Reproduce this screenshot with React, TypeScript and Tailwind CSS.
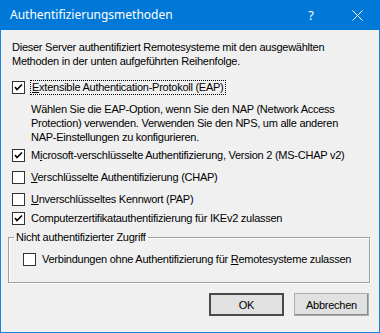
import React from 'react';

function Check({ checked }: { checked?: boolean }) {
  return (
    <span className="w-[13px] h-[13px] shrink-0 border border-[#333333] bg-white flex items-center justify-center">
      {checked && (
        <svg width="11" height="11" viewBox="0 0 11 11">
          <path d="M2 5 L4 7.5 L9 2.5" stroke="#000" strokeWidth="1.6" fill="none" />
        </svg>
      )}
    </span>
  );
}

function Row({ checked, children, className = '' }: { checked?: boolean; children: React.ReactNode; className?: string }) {
  return (
    <div className={`flex items-center gap-[6px] h-[16px] ${className}`}>
      <Check checked={checked} />
      <span className="whitespace-nowrap">{children}</span>
    </div>
  );
}

function Btn({ children, def }: { children: React.ReactNode; def?: boolean }) {
  return (
    <button
      className={`w-[75px] h-[23px] bg-[#e1e1e1] text-black flex items-center justify-center ${
        def ? 'border-2 border-[#4a4a4a]' : 'border border-[#adadad] shadow-[inset_-1px_-1px_0_#8a8a8a]'
      }`}
    >
      {children}
    </button>
  );
}

export default function App() {
  return (
    <div className="w-[380px] h-[333px] flex flex-col border border-[#1883d7] border-t-0 bg-[#f0f0f0] text-[11px] leading-[14px] tracking-[-0.25px] text-black font-['Liberation_Sans',Arial,sans-serif]">
      <div className="h-[30px] shrink-0 bg-[#0078d7] -mx-px flex items-center text-white pl-[10px] tracking-normal">
        <span className="flex-1 text-[12px] font-['Noto_Sans',sans-serif]">Authentifizierungsmethoden</span>
        <span className="w-[46px] text-center text-[13px] font-['Noto_Sans',sans-serif]">?</span>
        <span className="w-[46px] flex justify-center">
          <svg width="11" height="11" viewBox="0 0 11 11">
            <path d="M0.5 0.5 L10.5 10.5 M10.5 0.5 L0.5 10.5" stroke="#fff" strokeWidth="1" />
          </svg>
        </span>
      </div>

      <div className="flex-1 flex flex-col px-[11px] pt-[10px]">
        <p>
          Dieser Server authentifiziert Remotesysteme mit den ausgewählten
          <br />
          Methoden in der unten aufgeführten Reihenfolge.
        </p>

        <div className="flex items-center gap-[5px] h-[16px] mt-[11px]">
          <Check checked />
          <span className="whitespace-nowrap border border-dotted border-black px-[1px] leading-[13px]">
            <u>E</u>xtensible Authentication-Protokoll (EAP)
          </span>
        </div>

        <p className="pl-[19px] mt-[7px]">
          Wählen Sie die EAP-Option, wenn Sie den NAP (Network Access
          <br />
          Protection) verwenden. Verwenden Sie den NPS, um alle anderen
          <br />
          NAP-Einstellungen zu konfigurieren.
        </p>

        <Row checked className="mt-[3px]">
          M<u>i</u>crosoft-verschlüsselte Authentifizierung, Version 2 (MS-CHAP v2)
        </Row>
        <Row className="mt-[6px]">
          <u>V</u>erschlüsselte Authentifizierung (CHAP)
        </Row>
        <Row className="mt-[6px]">
          <u>U</u>nverschlüsseltes Kennwort (PAP)
        </Row>
        <Row checked className="mt-[3px]">
          Computerzertifikatauthentifizierung für IKEv2 zulassen
        </Row>

        <fieldset className="mt-[4px] -ml-[4px] w-[362px] h-[53px] border border-[#a0a0a0] shadow-[1px_1px_0_#ffffff,inset_1px_1px_0_#ffffff] px-[14px] pt-[7px]">
          <legend className="px-[2px] -ml-[9px]">Nicht authentifizierter Zugriff</legend>
          <Row>
            Verbindungen ohne Authentifizierung für <u>R</u>emotesysteme zulassen
          </Row>
        </fieldset>

        <div className="flex justify-end gap-[10px] mt-[10px] mr-[-1px]">
          <Btn def>OK</Btn>
          <Btn>Abbrechen</Btn>
        </div>
      </div>
    </div>
  );
}
